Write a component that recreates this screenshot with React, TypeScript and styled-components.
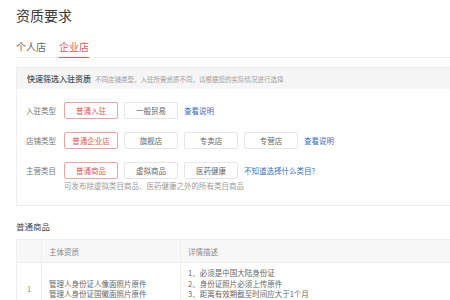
import styled, { createGlobalStyle } from 'styled-components';

const GlobalStyle = createGlobalStyle`
  html, body {
    margin: 0;
    padding: 0;
    background: #fff;
    overflow: hidden;
  }
  body {
    font-family: "Noto Sans CJK SC", "Noto Sans", sans-serif;
    color: #333;
  }
`;

const RED = '#e05a57';
const BLUE = '#3a6cbf';

const ROWS = [
  {
    label: '入驻类型',
    options: ['普通入驻', '一般贸易'],
    link: '查看说明',
  },
  {
    label: '店铺类型',
    options: ['普通企业店', '旗舰店', '专卖店', '专营店'],
    link: '查看说明',
  },
  {
    label: '主营类目',
    options: ['普通商品', '虚拟商品', '医药健康'],
    link: '不知道选择什么类目?',
    hint: '可发布除虚拟类目商品、医药健康之外的所有类目商品',
  },
];

const DETAILS = [
  '1、必须是中国大陆身份证',
  '2、身份证照片必须上传原件',
  '3、距离有效期截至时间应大于1个月',
  '4、证件清晰，露出人证五官清楚',
];

const App = () => {
  return (
    <Page>
      <GlobalStyle />
      <Title>资质要求</Title>
      <Tabs>
        <Tab>个人店</Tab>
        <Tab $active>企业店</Tab>
      </Tabs>

      <FilterBox>
        <FilterHead>
          <strong>快速筛选入驻资质</strong>
          <span>不同店铺类型，入驻所需资质不同，请根据您的实际情况进行选择</span>
        </FilterHead>
        <FilterBody>
          {ROWS.map((row) => (
            <div key={row.label}>
              <FilterRow>
                <RowLabel>{row.label}</RowLabel>
                {row.options.map((opt, i) => (
                  <OptionButton key={opt} $active={i === 0}>
                    {opt}
                  </OptionButton>
                ))}
                <LinkText>{row.link}</LinkText>
              </FilterRow>
              {row.hint && <Hint>{row.hint}</Hint>}
            </div>
          ))}
        </FilterBody>
      </FilterBox>

      <SectionTitle>普通商品</SectionTitle>
      <Table>
        <thead>
          <tr>
            <HeadCell $w={25}></HeadCell>
            <HeadCell $w={139}>主体资质</HeadCell>
            <HeadCell>详情描述</HeadCell>
          </tr>
        </thead>
        <tbody>
          <tr>
            <IndexCell>1</IndexCell>
            <Cell>
              管理人身份证人像面照片原件
              <br />
              管理人身份证国徽面照片原件
            </Cell>
            <Cell>
              {DETAILS.map((d) => (
                <div key={d}>{d}</div>
              ))}
            </Cell>
          </tr>
        </tbody>
      </Table>
    </Page>
  );
};

export default App;

const Page = styled.div`
  width: 620px;
  height: 300px;
  padding: 0 0 0 16px;
  overflow: hidden;
`;

const Title = styled.h1`
  margin: 0;
  height: 30px;
  line-height: 31px;
  font-size: 14px;
  font-weight: 400;
  color: #3a3a3a;
`;

const Tabs = styled.div`
  display: flex;
  gap: 13px;
  height: 28px;
  border-bottom: 1px solid #eeeeee;
  box-sizing: border-box;
`;

const Tab = styled.div<{ $active?: boolean }>`
  padding-top: 8px;
  line-height: 18px;
  font-size: 10px;
  color: ${(p) => (p.$active ? RED : '#666')};
  border-bottom: 1.5px solid ${(p) => (p.$active ? RED : 'transparent')};
  margin-bottom: -1px;
`;

const FilterBox = styled.div`
  margin-top: 9px;
  border: 1px solid #eeeeee;
  height: 139px;
  box-sizing: border-box;
`;

const FilterHead = styled.div`
  height: 21px;
  background: #f5f5f5;
  display: flex;
  align-items: center;
  padding-left: 10px;
  gap: 4px;
  strong {
    font-size: 8px;
    font-weight: 500;
    color: #4a4a4a;
  }
  span {
    font-size: 6.5px;
    color: #a0a0a0;
  }
`;

const FilterBody = styled.div`
  padding: 13px 0 0 9px;
`;

const FilterRow = styled.div`
  display: flex;
  align-items: center;
  gap: 6px;
  height: 17px;
  margin-bottom: 13px;
`;

const RowLabel = styled.div`
  width: 32px;
  font-size: 7.5px;
  color: #777;
`;

const OptionButton = styled.div<{ $active?: boolean }>`
  width: 54px;
  height: 17px;
  box-sizing: border-box;
  border: 1px solid ${(p) => (p.$active ? '#eca3a1' : '#e6e6e6')};
  border-radius: 2px;
  font-size: 7.5px;
  line-height: 15px;
  text-align: center;
  color: ${(p) => (p.$active ? RED : '#666')};
`;

const LinkText = styled.span`
  font-size: 7.5px;
  color: ${BLUE};
`;

const Hint = styled.div`
  margin: -12px 0 0 38px;
  font-size: 7.5px;
  line-height: 12px;
  color: #9a9a9a;
`;

const SectionTitle = styled.div`
  margin-top: 14px;
  height: 19px;
  font-size: 8.5px;
  line-height: 12px;
  color: #444;
`;

const Table = styled.table`
  border-collapse: collapse;
  width: 600px;
  font-size: 7.5px;
  color: #666;
`;

const HeadCell = styled.th<{ $w?: number }>`
  width: ${(p) => (p.$w ? `${p.$w}px` : 'auto')};
  height: 23px;
  box-sizing: border-box;
  padding: 0 0 0 7px;
  background: #f7f7f7;
  border: 1px solid #eeeeee;
  text-align: left;
  font-weight: 400;
  color: #888;
`;

const Cell = styled.td`
  padding: 5px 0 5px 7px;
  border: 1px solid #eeeeee;
  line-height: 10.5px;
  vertical-align: middle;
`;

const IndexCell = styled(Cell)`
  padding: 0;
  text-align: center;
  color: #888;
`;
